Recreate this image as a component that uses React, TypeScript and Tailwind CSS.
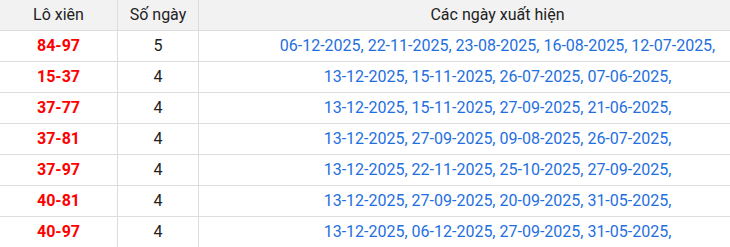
import React from "react";

const rows: [string, string, string][] = [
  ["84-97", "5", "06-12-2025, 22-11-2025, 23-08-2025, 16-08-2025, 12-07-2025,"],
  ["15-37", "4", "13-12-2025, 15-11-2025, 26-07-2025, 07-06-2025,"],
  ["37-77", "4", "13-12-2025, 15-11-2025, 27-09-2025, 21-06-2025,"],
  ["37-81", "4", "13-12-2025, 27-09-2025, 09-08-2025, 26-07-2025,"],
  ["37-97", "4", "13-12-2025, 22-11-2025, 25-10-2025, 27-09-2025,"],
  ["40-81", "4", "13-12-2025, 27-09-2025, 20-09-2025, 31-05-2025,"],
  ["40-97", "4", "13-12-2025, 06-12-2025, 27-09-2025, 31-05-2025,"],
];

export default function App() {
  return (
    <div className="w-[730px] h-[247px] overflow-hidden bg-white" style={{ fontFamily: "Roboto, 'Liberation Sans', sans-serif" }}>
      <div className="w-[800px] text-[16px]">
        <div className="flex h-[31px] bg-[#f2f2f2] border-b border-[#dddddd] text-[#222]">
          <div className="w-[118px] shrink-0 border-r border-[#dddddd] flex items-center justify-center">Lô xiên</div>
          <div className="w-[81px] shrink-0 border-r border-[#dddddd] flex items-center justify-center">Số ngày</div>
          <div className="w-[597px] shrink-0 flex items-center justify-center">Các ngày xuất hiện</div>
        </div>
        {rows.map(([a, b, c]) => (
          <div key={a} className="flex h-[31px] border-b border-[#dddddd]">
            <div className="w-[118px] shrink-0 border-r border-[#dddddd] flex items-center justify-center font-bold text-[#ff0000]">{a}</div>
            <div className="w-[81px] shrink-0 border-r border-[#dddddd] flex items-center justify-center text-[#222]">{b}</div>
            <div className="w-[597px] shrink-0 flex items-center justify-center text-[#1f6fe0]">{c}</div>
          </div>
        ))}
      </div>
    </div>
  );
}
